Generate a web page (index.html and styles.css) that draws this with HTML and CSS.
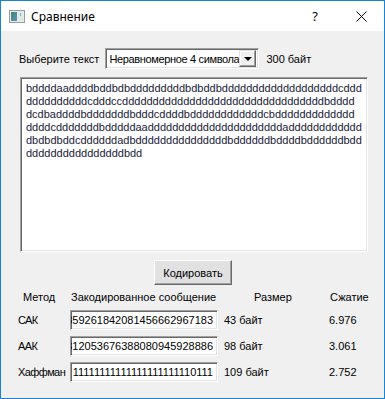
FILE: index.html
```html
<!DOCTYPE html>
<html lang="ru">
<head>
    <meta charset="UTF-8">
    <meta name="viewport" content="width=device-width, initial-scale=1.0">
    <title>Сравнение</title>
    <link rel="stylesheet" href="styles.css">
</head>
<body>
    <div class="window">
        <!-- Заголовок окна -->
        <div class="titlebar">
            <svg class="app-icon" width="16" height="13" viewBox="0 0 16 13">
                <defs>
                    <linearGradient id="g" x1="0" y1="0" x2="1" y2="1">
                        <stop offset="0" stop-color="#3d8a6a"/>
                        <stop offset="1" stop-color="#5b8fc0"/>
                    </linearGradient>
                </defs>
                <rect x="0.5" y="0.5" width="15" height="12" fill="#e9ecec" stroke="#9a9a9a"/>
                <rect x="2" y="2" width="6" height="9" fill="url(#g)"/>
                <rect x="9" y="2" width="5" height="9" fill="#dfe8ea"/>
                <rect x="11" y="3" width="1" height="3" fill="#8fb0a8"/>
            </svg>
            <span class="title">Сравнение</span>
            <span class="caption-btn help">?</span>
            <span class="caption-btn">
                <svg width="11" height="11" viewBox="0 0 11 11">
                    <path d="M0.5 0.5 L10.5 10.5 M10.5 0.5 L0.5 10.5" stroke="#000" stroke-width="1"/>
                </svg>
            </span>
        </div>

        <div class="content">
            <!-- Выбор текста -->
            <div class="select-row">
                <span>Выберите текст</span>
                <div class="combo sunken">
                    <span class="combo-text">Неравномерное 4 символа</span>
                    <span class="combo-btn"><i class="arrow"></i></span>
                </div>
                <span class="bytes">300 байт</span>
            </div>

            <!-- Исходный текст -->
            <div class="text-box sunken">bddddaaddddbddbdbdddddddddbdbddbdddddddddddddddddddcddd
ddddddddddcdddccdddddddddddddddddddddddddddddddddbdddd
dcdbaddddbdddddddbdddcddddbddddddddddddcbddddddddddddd
ddddcdddddddbdddddaaddddddddddddddddddddddadddddddddddd
dbdbdbddcddddddadbdddddddddddddddbddddddbddddbddddddbdd
ddddddddddddddddbdd</div>

            <div class="btn-row">
                <button class="btn">Кодировать</button>
            </div>

            <!-- Результаты -->
            <div class="results">
                <span class="head h-method">Метод</span>
                <span class="head h-code">Закодированное сообщение</span>
                <span class="head h-size">Размер</span>
                <span class="head h-ratio">Сжатие</span>

                <span class="name">САК</span>
                <div class="edit sunken"><span>859261842081456662967183</span></div>
                <span class="size">43 байт</span>
                <span class="ratio">6.976</span>

                <span class="name">ААК</span>
                <div class="edit sunken"><span>312053676388080945928886</span></div>
                <span class="size">98 байт</span>
                <span class="ratio">3.061</span>

                <span class="name">Хаффман</span>
                <div class="edit sunken"><span>11111111111111111111110111</span></div>
                <span class="size">109 байт</span>
                <span class="ratio">2.752</span>
            </div>
        </div>
    </div>
</body>
</html>
```

FILE: styles.css
```css
body {
    margin: 0;
    font-family: "Liberation Sans", Arial, sans-serif;
    font-size: 11px;
    color: #000;
}
.window {
    box-sizing: border-box;
    width: 385px;
    height: 399px;
    border: 1px solid #1883d7;
    background-color: #f0f0f0;
    display: flex;
    flex-direction: column;
}
.titlebar {
    height: 30px;
    background-color: #fff;
    display: flex;
    align-items: center;
}
.app-icon {
    margin-left: 8px;
    margin-top: 1px;
}
.title {
    flex: 1;
    margin-left: 6px;
    font-family: "Noto Sans", sans-serif;
    font-size: 12px;
}
.caption-btn {
    width: 46px;
    height: 30px;
    display: flex;
    align-items: center;
    justify-content: center;
}
.help {
    font-family: "Noto Sans", sans-serif;
    font-size: 13px;
}
.content {
    padding: 17px 17px 0 17px;
}
.sunken {
    box-sizing: border-box;
    background-color: #fff;
    border: 1px solid;
    border-color: #a0a0a0 #fff #fff #a0a0a0;
    box-shadow: inset 1px 1px #696969, inset -1px -1px #e3e3e3;
}
.select-row {
    display: flex;
    align-items: center;
    height: 21px;
    padding-left: 1px;
}
.combo {
    width: 154px;
    height: 21px;
    margin-left: 6px;
    display: flex;
    align-items: center;
    padding: 2px;
}
.combo-text {
    flex: 1;
    padding-left: 1px;
    white-space: nowrap;
    overflow: hidden;
    letter-spacing: -0.35px;
}
.combo-btn {
    box-sizing: border-box;
    width: 17px;
    height: 17px;
    background-color: #f0f0f0;
    border: 1px solid;
    border-color: #e3e3e3 #696969 #696969 #e3e3e3;
    box-shadow: inset -1px -1px #a0a0a0, inset 1px 1px #fff;
    display: flex;
    align-items: center;
    justify-content: center;
}
.arrow {
    width: 0;
    height: 0;
    border-left: 4px solid transparent;
    border-right: 4px solid transparent;
    border-top: 4px solid #000;
    margin-top: 1px;
}
.bytes {
    margin-left: 7px;
}
.text-box {
    width: 348px;
    height: 175px;
    margin: 8px 0 0 2px;
    padding: 4px 5px;
    white-space: pre;
    overflow: hidden;
    line-height: 13px;
    color: #1a1a38;
}
.btn-row {
    display: flex;
    justify-content: center;
    margin-top: 8px;
}
.btn {
    box-sizing: border-box;
    width: 78px;
    height: 25px;
    font-family: "Liberation Sans", Arial, sans-serif;
    font-size: 11px;
    background-color: #e1e1e1;
    border: 1px solid;
    border-color: #fff #696969 #696969 #fff;
    box-shadow: inset -1px -1px #a0a0a0, inset 1px 1px #e3e3e3;
    padding: 0;
    margin-left: 1px;
}
.results {
    display: grid;
    grid-template-columns: 52px 154px 105px auto;
    grid-template-rows: 14px 20px 20px 20px;
    row-gap: 6px;
    align-items: center;
    margin-top: 5px;
}
.h-method { padding-left: 5px; }
.h-code { padding-left: 1px; }
.h-size { padding-left: 30px; }
.h-ratio { padding-left: 1px; }
.name {
    letter-spacing: -0.6px;
}
.edit {
    width: 148px;
    height: 20px;
    padding: 0 4px 0 2px;
    display: flex;
    align-items: center;
    justify-content: flex-end;
    overflow: hidden;
    white-space: nowrap;
}
```
